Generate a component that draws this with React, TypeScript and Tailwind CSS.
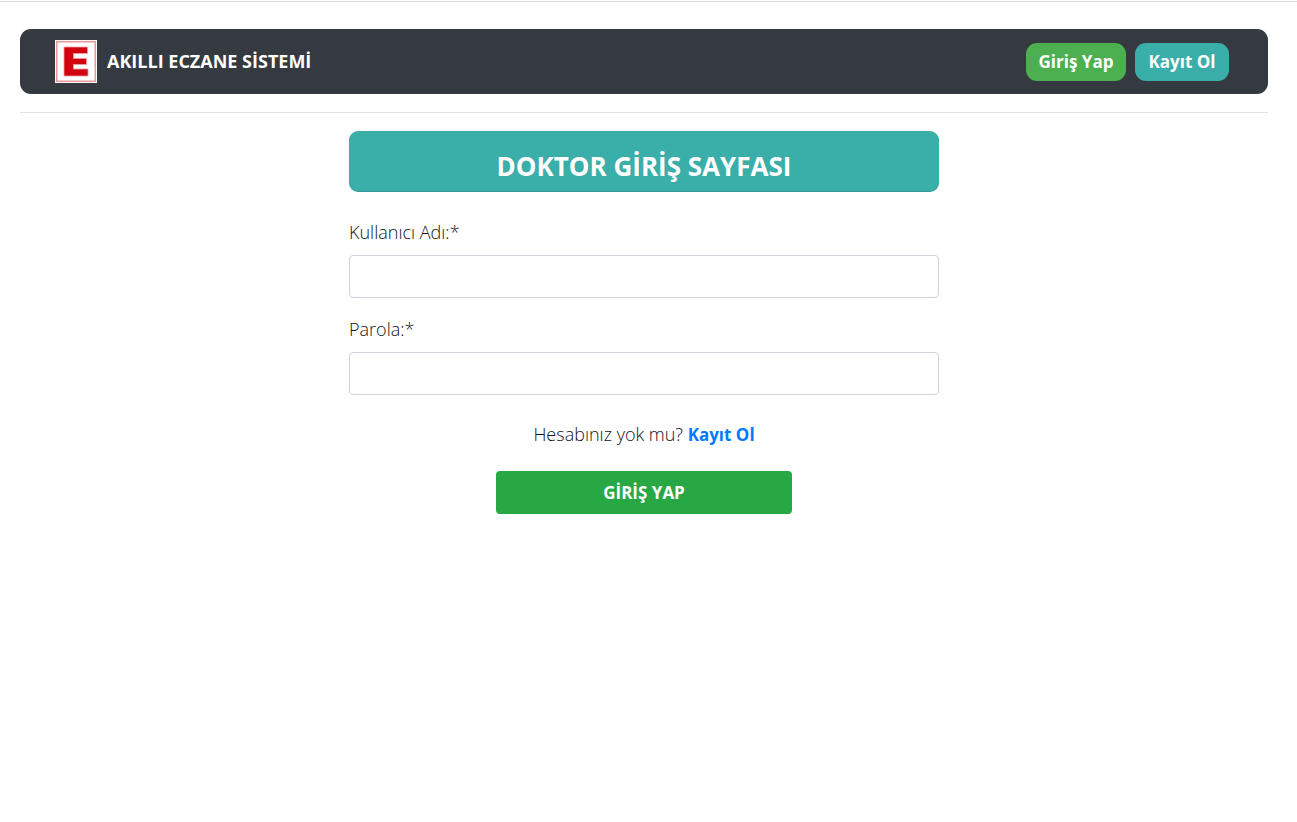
function PharmacyLogo() {
  return (
    <svg viewBox="0 0 42 43" className="h-[43px] w-[42px] shrink-0" role="img" aria-label="Eczane">
      <rect width="42" height="43" fill="#fdf6f5" />
      <rect x="1.75" y="1.75" width="38.5" height="39.5" fill="#ffffff" stroke="#e59a9c" strokeWidth="1.5" />
      <path d="M9 7H32.5V13.5H18.5V18.5H31.5V24.5H18.5V29H33V36H9Z" fill="#d2040f" stroke="#ee9da0" strokeWidth="0.8" />
    </svg>
  );
}

type FieldProps = { id: string; label: string; type: string };

function Field({ id, label, type }: FieldProps) {
  return (
    <div className="mb-[18px]">
      <label htmlFor={id} className="mb-[9px] block text-[18px] font-[350]">
        {label}
      </label>
      <input
        id={id}
        name={id}
        type={type}
        className="block h-[43px] w-full rounded-[4px] border border-[#ced4da] bg-white px-3 outline-none focus:border-[#80bdff]"
      />
    </div>
  );
}

export default function App() {
  return (
    <div className="min-h-screen bg-white pt-px font-['Open_Sans','Noto_Sans',sans-serif] text-[17px] leading-[27px] text-[#111417]">
      <div className="border-t border-[#dcdcdc] pt-[27px] pr-[29px] pl-5">
        <header className="flex h-[65px] items-center justify-between rounded-[11px] bg-[#343a40] pr-[39px] pl-[35px]">
          <a href="#" className="flex items-center gap-[10px] text-[18px] font-bold text-white">
            <PharmacyLogo />
            <span>AKILLI ECZANE SİSTEMİ</span>
          </a>
          <nav className="flex gap-[9px] text-center font-bold text-white">
            <a href="#giris" className="flex h-[38px] w-[100px] items-center justify-center rounded-[11px] bg-[#4caf50]">
              Giriş Yap
            </a>
            <a href="#kayit" className="flex h-[38px] w-[94px] items-center justify-center rounded-[11px] bg-[#3aaea9]">
              Kayıt Ol
            </a>
          </nav>
        </header>
        <hr className="my-[18px] border-t border-[#e2e2e2]" />
        <main className="mx-auto max-w-[590px]">
          <h1 className="mb-[27px] flex h-[61px] items-center justify-center rounded-[9px] border-b border-[#329893] bg-[#3aaea9] pt-[10px] text-[26px] leading-8 font-bold text-white">
            DOKTOR GİRİŞ SAYFASI
          </h1>
          <form onSubmit={(event) => event.preventDefault()}>
            <Field id="username" label="Kullanıcı Adı:*" type="text" />
            <Field id="password" label="Parola:*" type="password" />
            <p className="mt-[26px] mb-[23px] text-center text-[18px] font-[350]">
              Hesabınız yok mu?{" "}
              <a href="#kayit" className="text-[17px] font-bold text-[#007bff]">
                Kayıt Ol
              </a>
            </p>
            <button type="submit" className="mx-auto block h-[43px] w-[296px] rounded-[4px] bg-[#28a745] font-bold text-white">
              GİRİŞ YAP
            </button>
          </form>
        </main>
      </div>
    </div>
  );
}
